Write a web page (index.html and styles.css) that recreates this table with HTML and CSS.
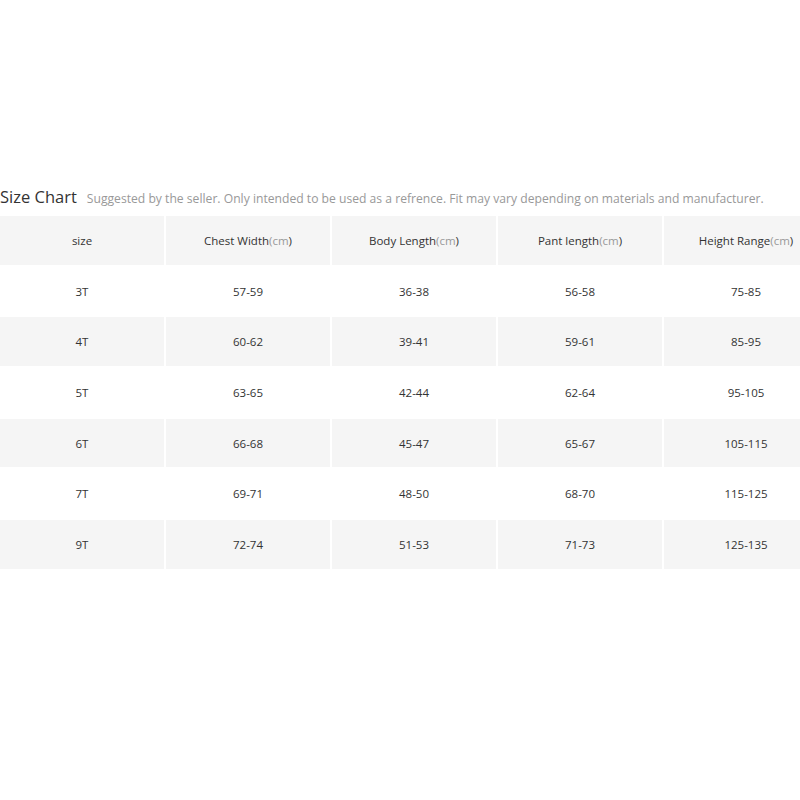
FILE: index.html
```html
<!DOCTYPE html>
<html>
<head>
<meta charset="utf-8">
<link rel="stylesheet" href="styles.css">
</head>
<body>
<div class="chart">
  <div class="heading">
    <span class="title">Size Chart</span>
    <span class="note">Suggested by the seller. Only intended to be used as a refrence. Fit may vary depending on materials and manufacturer.</span>
  </div>
  <table class="sizes">
    <tr class="head">
      <td>size</td>
      <td>Chest Width<span class="unit">(cm</span>)</td>
      <td>Body Length<span class="unit">(cm</span>)</td>
      <td>Pant length<span class="unit">(cm</span>)</td>
      <td>Height Range<span class="unit">(cm</span>)</td>
    </tr>
    <tr><td>3T</td><td>57-59</td><td>36-38</td><td>56-58</td><td>75-85</td></tr>
    <tr class="alt"><td>4T</td><td>60-62</td><td>39-41</td><td>59-61</td><td>85-95</td></tr>
    <tr><td>5T</td><td>63-65</td><td>42-44</td><td>62-64</td><td>95-105</td></tr>
    <tr class="alt"><td>6T</td><td>66-68</td><td>45-47</td><td>65-67</td><td>105-115</td></tr>
    <tr><td>7T</td><td>69-71</td><td>48-50</td><td>68-70</td><td>115-125</td></tr>
    <tr class="alt"><td>9T</td><td>72-74</td><td>51-53</td><td>71-73</td><td>125-135</td></tr>
  </table>
</div>
</body>
</html>
```
FILE: styles.css
```css
html, body {
  margin: 0;
  padding: 0;
  background: #fff;
  overflow: hidden;
}
body {
  width: 800px;
  height: 800px;
  font-family: "Open Sans", "DejaVu Sans", sans-serif;
  color: #333;
}
.chart {
  padding-top: 185px;
}
.heading {
  display: flex;
  align-items: baseline;
  gap: 10px;
  height: 29px;
  white-space: nowrap;
}
.title {
  font-size: 16.5px;
  color: #333;
}
.note {
  font-size: 12.15px;
  color: #999;
}
.sizes {
  border-collapse: separate;
  border-spacing: 2px;
  margin-left: -2px;
  table-layout: fixed;
  width: 832px;
}
.sizes td {
  width: 164px;
  height: 48.7px;
  padding: 0;
  text-align: center;
  vertical-align: middle;
  font-size: 11.5px;
  color: #333;
}
.sizes tr.head td,
.sizes tr.alt td {
  background: #f5f5f5;
}
.unit {
  color: #999;
}
```
